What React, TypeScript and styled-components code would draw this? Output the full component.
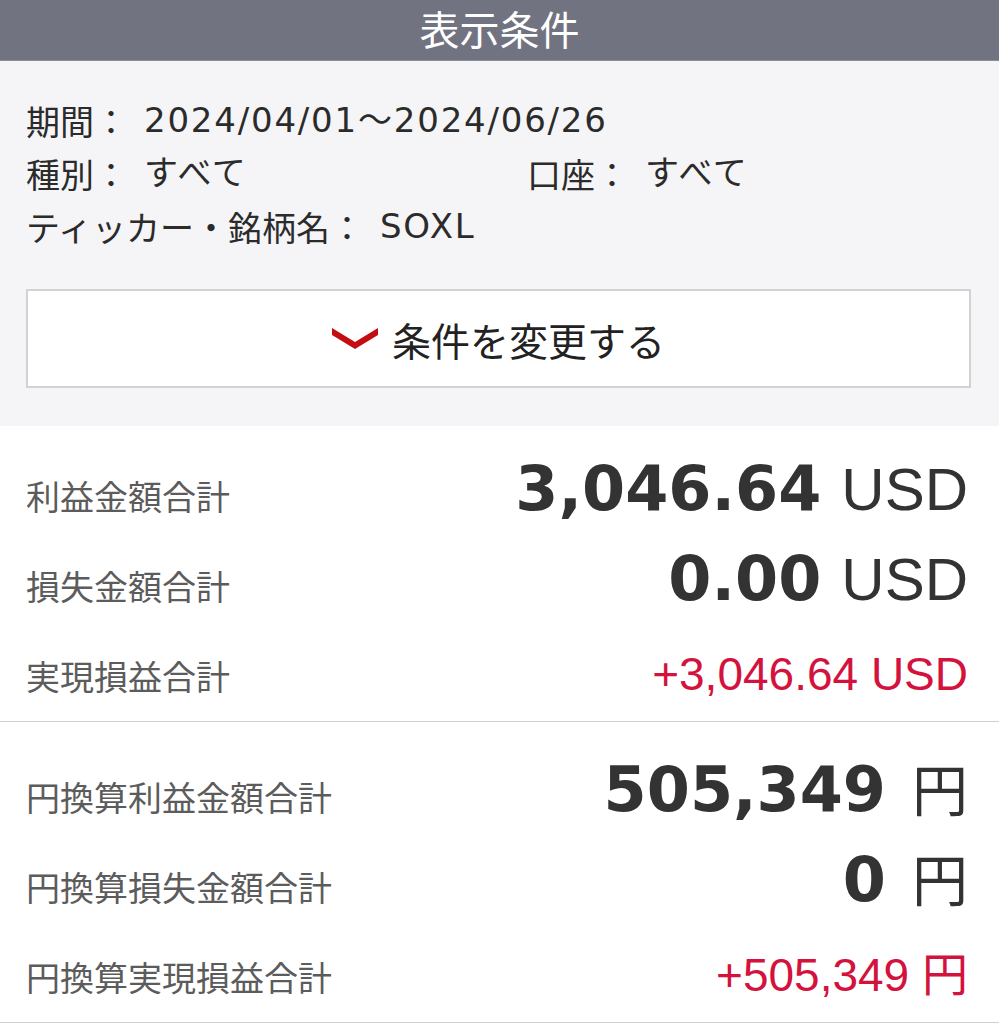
import styled, { createGlobalStyle } from 'styled-components';

// -----------------------------------------------------------------------------

const GlobalStyle = createGlobalStyle`
	html, body {
		margin: 0;
		padding: 0;
		background: #ffffff;
	}

	body {
		font-family: "Liberation Sans", "Noto Sans CJK JP", sans-serif;
		color: #333333;
	}
`;

type Summary = {
	label: string;
	amount: string;
	unit: string;
	total?: boolean;
};

const USD_ROWS: Summary[] = [
	{ label: '利益金額合計', amount: '3,046.64', unit: 'USD' },
	{ label: '損失金額合計', amount: '0.00', unit: 'USD' },
	{ label: '実現損益合計', amount: '+3,046.64', unit: 'USD', total: true },
];

const JPY_ROWS: Summary[] = [
	{ label: '円換算利益金額合計', amount: '505,349', unit: '円' },
	{ label: '円換算損失金額合計', amount: '0', unit: '円' },
	{ label: '円換算実現損益合計', amount: '+505,349', unit: '円', total: true },
];

function ChevronDown(): JSX.Element {
	return (
		<Chevron viewBox="0 0 46 21" aria-hidden="true">
			<polygon points="0,0 23,14 46,0 46,7 23,21 0,7" fill="#c30d12" />
		</Chevron>
	);
}

function SummaryGroup({ rows }: { rows: Summary[] }): JSX.Element {
	return (
		<Section>
			{rows.map((row) => (
				<Row key={row.label}>
					<Label>{row.label}</Label>
					{row.total ? (
						<Total>
							{row.amount} {row.unit}
						</Total>
					) : (
						<Value>
							<Amount>{row.amount}</Amount>
							<Unit $yen={row.unit === '円'}>{row.unit}</Unit>
						</Value>
					)}
				</Row>
			))}
		</Section>
	);
}

export default function App(): JSX.Element {
	return (
		<>
			<GlobalStyle />
			<Page>
				<Header>表示条件</Header>

				<Conditions>
					<ConditionList>
						<Condition $wide>
							<Term>期間：</Term>
							<Detail>2024/04/01〜2024/06/26</Detail>
						</Condition>
						<Condition>
							<Term>種別：</Term>
							<Detail>すべて</Detail>
						</Condition>
						<Condition>
							<Term>口座：</Term>
							<Detail>すべて</Detail>
						</Condition>
						<Condition $wide>
							<Term>ティッカー・銘柄名：</Term>
							<Detail>SOXL</Detail>
						</Condition>
					</ConditionList>

					<ChangeButton type="button">
						<ChevronDown />
						条件を変更する
					</ChangeButton>
				</Conditions>

				<SummaryGroup rows={USD_ROWS} />
				<SummaryGroup rows={JPY_ROWS} />
			</Page>
		</>
	);
}

// -----------------------------------------------------------------------------

const Page = styled.div`
	width: 999px;
	min-height: 1024px;
	display: flex;
	flex-direction: column;
	background: #ffffff;
`;

const Header = styled.h1`
	margin: 0;
	height: 60px;
	border-bottom: 1px solid #8c8d97;
	background: #727380;
	color: #ffffff;
	font-family: "Noto Sans CJK JP", sans-serif;
	font-size: 40px;
	font-weight: 400;
	line-height: 56px;
	text-align: center;
`;

const Conditions = styled.section`
	display: flex;
	flex-direction: column;
	padding: 33px 28px 38px 26px;
	background: #f5f5f7;
`;

const ConditionList = styled.dl`
	display: grid;
	grid-template-columns: 501px 1fr;
	grid-auto-rows: 53px;
	margin: 0;
`;

const Condition = styled.div<{ $wide?: boolean }>`
	display: flex;
	align-items: center;
	grid-column: ${(p) => (p.$wide ? '1 / -1' : 'auto')};
	font-size: 34px;
	line-height: 53px;
	color: #2b2b2b;
`;

const Term = styled.dt`
	font-family: "Noto Sans CJK JP", sans-serif;
`;

const Detail = styled.dd`
	margin: 0 0 0 16px;
	font-family: "DejaVu Sans", "Noto Sans CJK JP", sans-serif;
	letter-spacing: 1.8px;
`;

const ChangeButton = styled.button`
	display: flex;
	align-items: center;
	justify-content: center;
	gap: 14px;
	height: 99px;
	margin-top: 36px;
	padding: 0;
	border: 2px solid #d2d2d4;
	background: #ffffff;
	color: #222222;
	font-family: "Noto Sans CJK JP", sans-serif;
	font-size: 39px;
	cursor: pointer;
`;

const Chevron = styled.svg`
	width: 46px;
	height: 21px;
	flex-shrink: 0;
`;

const Section = styled.section`
	display: flex;
	flex-direction: column;
	padding: 25px 31px 0 26px;
	border-bottom: 1px solid #cfcfcf;

	& + & {
		padding-top: 30px;
	}
`;

const Row = styled.div`
	display: flex;
	align-items: baseline;
	justify-content: space-between;
	height: 90px;
`;

const Label = styled.span`
	font-family: "Noto Sans CJK JP", sans-serif;
	font-size: 34px;
	line-height: 90px;
	color: #5c5c5c;
`;

const Value = styled.span`
	font-size: 60px;
	line-height: 1;
	white-space: nowrap;
	color: #333333;
`;

const Amount = styled.span`
	font-family: "DejaVu Sans", sans-serif;
	font-weight: 700;
	font-size: 62px;
`;

const Unit = styled.span<{ $yen?: boolean }>`
	margin-left: ${(p) => (p.$yen ? '26px' : '20px')};
	font-size: ${(p) => (p.$yen ? '56px' : '60px')};
	font-weight: 400;
`;

const Total = styled.span`
	font-size: 46px;
	line-height: 1;
	white-space: nowrap;
	color: #d3123d;
`;
